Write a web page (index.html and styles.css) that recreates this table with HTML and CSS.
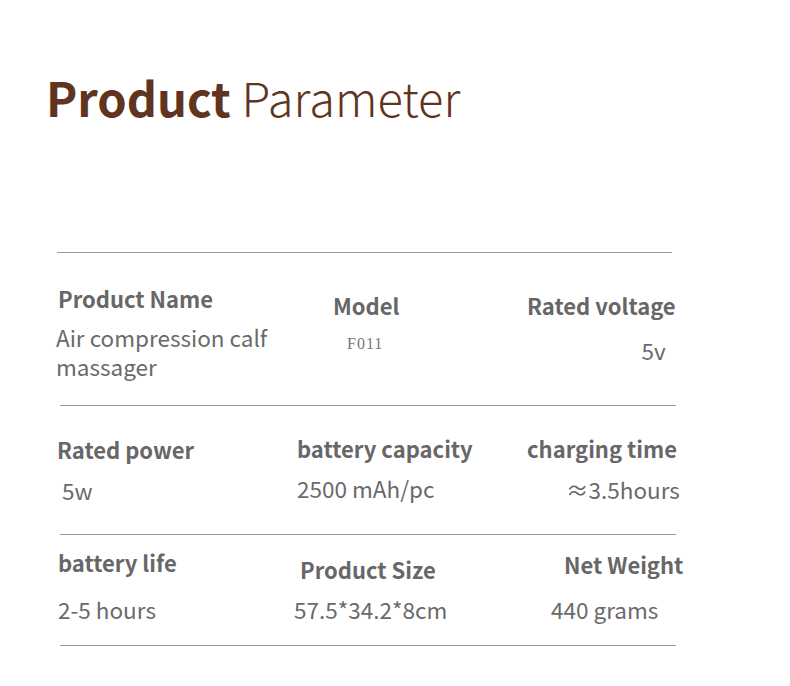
FILE: index.html
```html
<!DOCTYPE html>
<html>
<head>
<meta charset="utf-8">
<link rel="stylesheet" href="styles.css">
</head>
<body>
<div class="page">
  <h1 class="title"><span class="title-bold">Product</span> <span class="title-light">Parameter</span></h1>
  <div class="params">
    <div class="row row-1">
      <div class="cell c1-1">
        <div class="label">Product Name</div>
        <div class="value v1-1">Air compression calf<br>massager</div>
      </div>
      <div class="cell c1-2">
        <div class="label">Model</div>
        <div class="model">F011</div>
      </div>
      <div class="cell c1-3">
        <div class="label">Rated voltage</div>
        <div class="value v1-3">5v</div>
      </div>
    </div>
    <div class="row row-2">
      <div class="cell c2-1">
        <div class="label">Rated power</div>
        <div class="value v2-1">5w</div>
      </div>
      <div class="cell c2-2">
        <div class="label">battery capacity</div>
        <div class="value v2-2">2500 mAh/pc</div>
      </div>
      <div class="cell c2-3">
        <div class="label">charging time</div>
        <div class="value v2-3">≈3.5hours</div>
      </div>
    </div>
    <div class="row row-3">
      <div class="cell c3-1">
        <div class="label">battery life</div>
        <div class="value v3-1">2-5 hours</div>
      </div>
      <div class="cell c3-2">
        <div class="label">Product Size</div>
        <div class="value v3-2">57.5*34.2*8cm</div>
      </div>
      <div class="cell c3-3">
        <div class="label">Net Weight</div>
        <div class="value v3-3">440 grams</div>
      </div>
    </div>
  </div>
</div>
</body>
</html>
```
FILE: styles.css
```css
* { box-sizing: border-box; }
html, body { margin: 0; padding: 0; background: #fff; }
body { font-family: "Noto Sans CJK SC", "Noto Sans", sans-serif; color: #666; }
.page { width: 790px; height: 686px; overflow: hidden; }

.title {
  margin: 67px 0 0 46px;
  font-size: 47px;
  line-height: 60px;
  font-weight: 400;
  color: #5f3420;
  white-space: nowrap;
}
.title-bold { font-weight: 700; }
.title-light { font-weight: 300; }

.params { margin-top: 125px; margin-left: 57px; width: 619px; }
.row {
  display: grid;
  grid-template-columns: 237px 233px 1fr;
  border-top: 1px solid #9c9c9c;
}
.row-1 { height: 153px; margin-right: 4px; }
.row-2 { height: 129px; margin-left: 3px; grid-template-columns: 237px 230px 1fr; }
.row-3 { height: 112px; margin-left: 3px; grid-template-columns: 237px 230px 1fr; border-bottom: 1px solid #9c9c9c; }

.label { font-size: 22px; line-height: 29px; font-weight: 700; color: #676767; white-space: nowrap; }
.value { font-size: 22.5px; line-height: 29px; font-weight: 400; color: #6a6a6a; white-space: nowrap; }
.model { font-family: "Liberation Serif", "DejaVu Serif", serif; font-size: 16px; line-height: 20px; color: #777; letter-spacing: 1px; }

/* row 1 */
.c1-1 { padding-top: 31px; padding-left: 1px; }
.v1-1 { margin-top: 10px; margin-left: -2px; }
.c1-2 { padding-top: 38px; padding-left: 39px; }
.model { margin-top: 14px; margin-left: 14px; }
.c1-3 { padding-top: 38px; }
.v1-3 { margin-top: 16px; text-align: right; padding-right: 10px; }

/* row 2 */
.c2-1 { padding-top: 29px; margin-left: -3px; }
.v2-1 { margin-top: 12px; margin-left: 5px; }
.c2-2 { padding-top: 28px; }
.v2-2 { margin-top: 11px; }
.c2-3 { padding-top: 28px; }
.v2-3 { margin-top: 12px; padding-left: 39px; }

/* row 3 */
.c3-1 { padding-top: 13px; margin-left: -2px; }
.v3-1 { margin-top: 18px; }
.c3-2 { padding-top: 20px; padding-left: 3px; }
.v3-2 { margin-top: 11px; margin-left: -6px; }
.c3-3 { padding-top: 15px; padding-left: 37px; }
.v3-3 { margin-top: 16px; margin-left: -13px; }
```
